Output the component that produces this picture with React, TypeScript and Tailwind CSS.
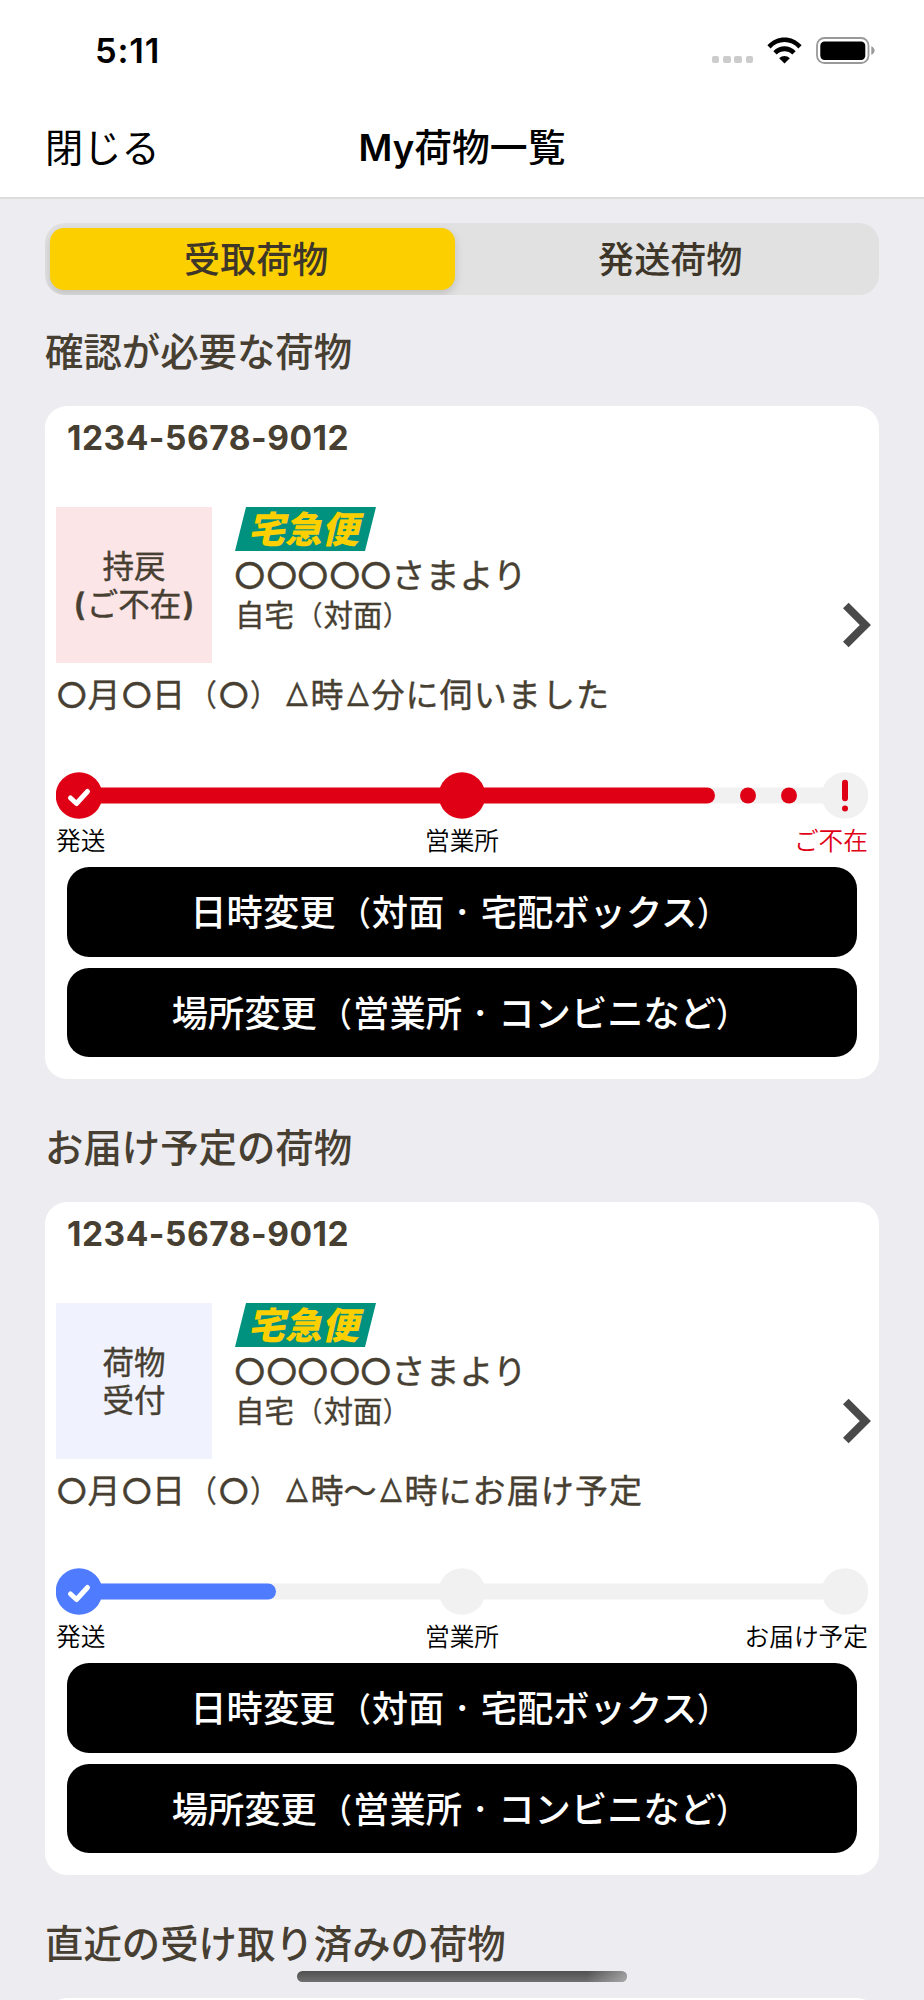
import { clsx } from "clsx";

type Tone = "absent" | "accepted";

interface Parcel {
  id: number;
  heading: string;
  trackingNumber: string;
  status: string[];
  tone: Tone;
  sender: string;
  place: string;
  when: string;
  message: string;
  steps: string[];
}

const parcels: Parcel[] = [
  {
    id: 1,
    heading: "確認が必要な荷物",
    trackingNumber: "1234-5678-9012",
    status: ["持戻", "(ご不在)"],
    tone: "absent",
    sender: "○○○○○さまより",
    place: "自宅（対面）",
    when: "○月○日（○）△時△分",
    message: "に伺いました",
    steps: ["発送", "営業所", "ご不在"],
  },
  {
    id: 2,
    heading: "お届け予定の荷物",
    trackingNumber: "1234-5678-9012",
    status: ["荷物", "受付"],
    tone: "accepted",
    sender: "○○○○○さまより",
    place: "自宅（対面）",
    when: "○月○日（○）△時～△時",
    message: "にお届け予定",
    steps: ["発送", "営業所", "お届け予定"],
  },
];

// Symbols that are set narrower than the kanji around them
const glyphStyles: Record<string, string> = {
  "○": "inline-flex w-[31.5px] justify-center scale-108",
  "△": "inline-flex w-[28px] justify-center scale-x-72 scale-y-95",
  "・": "inline-block scale-70",
  "（": "inline-block origin-right -translate-x-[0.04em] scale-x-85 scale-y-92",
  "）": "inline-block origin-left scale-x-85 scale-y-92",
  "(": "mr-[1.5px] font-semibold",
  ")": "ml-[1.5px] font-semibold",
};

function Glyphs({ text }: { text: string }) {
  return (
    <span className="whitespace-nowrap">
      {[...text].map((char, i) =>
        glyphStyles[char] ? (
          <span key={i} className={glyphStyles[char]}>
            {char}
          </span>
        ) : (
          char
        )
      )}
    </span>
  );
}

function StatusBar() {
  return (
    <div className="flex h-[101px] items-center justify-between pl-[95px] pr-[48px]">
      <span className="pt-[2px] text-[34.5px] font-semibold leading-none tracking-[0.8px] text-black">5:11</span>
      <div className="flex items-center">
        <div className="mr-[14px] mt-[18px] flex gap-[3.7px]">
          {[...Array(4)].map((_, i) => (
            <span key={i} className="h-[7.5px] w-[7.5px] rounded-[2px] bg-[#cccccc]" />
          ))}
        </div>
        <svg width="35" height="27" viewBox="0 0 35 27" className="mr-[14px]">
          <path d="M0.4 8.2C9.8-2.2 25.2-2.2 34.6 8.2L31.4 11.4C23.6 3 11.4 3 3.6 11.4Z" />
          <path d="M6.3 14.2C12.6 7.6 22.4 7.6 28.7 14.2L25.3 17.6C20.8 13.2 14.2 13.2 9.7 17.6Z" />
          <path d="M12.2 21.2C15.4 18.4 19.6 18.4 22.8 21.2L17.5 26.6Z" />
        </svg>
        <svg width="60" height="27" viewBox="0 0 60 27">
          <rect x="1" y="1" width="51.5" height="25" rx="7.5" fill="none" stroke="#999999" strokeWidth="1.8" />
          <rect x="4.3" y="4.5" width="45" height="18.5" rx="4.2" />
          <path d="M55.3 9.2Q58.6 10.8 58.6 13.6T55.3 18Z" fill="#999999" />
        </svg>
      </div>
    </div>
  );
}

function Header() {
  return (
    <header className="border-b-2 border-[#dcdcdc] bg-white">
      <StatusBar />
      <div className="grid h-[96px] grid-cols-3 items-center px-[45px] pb-[2px] text-[38.2px] leading-none text-black">
        <button className="text-left">閉じる</button>
        <h1 className="whitespace-nowrap text-center text-[37.8px] font-medium">
          <span className="text-[36.7px] font-semibold">My</span>荷物一覧
        </h1>
      </div>
    </header>
  );
}

function Tabs() {
  return (
    <div className="mx-[45px] mt-6 flex h-[72px] overflow-hidden rounded-[20px] bg-[#e1e1e1] px-[4.5px] py-[5px] text-[36.1px] font-medium leading-none text-[#3d3629]">
      <button className="h-full w-[405.5px] rounded-[14px] bg-[#fccf00] pl-2 pt-[2px] shadow-[0_4px_10px_rgba(0,0,0,0.15)]">
        受取荷物
      </button>
      <button className="h-full flex-1 pl-[11px] pt-[2px]">発送荷物</button>
    </div>
  );
}

function ServiceLogo() {
  return (
    <svg width="141" height="44" viewBox="0 0 141 44" className="overflow-visible">
      <path d="M11 0H141L130 44H0Z" fill="#00917f" />
      <text
        x="21"
        y="35.5"
        transform="skewX(-13)"
        fontSize="37"
        fontWeight="900"
        fill="#fccf00"
        textLength="111"
        className="font-['Noto_Sans_CJK_JP',sans-serif]"
      >
        宅急便
      </text>
    </svg>
  );
}

function Progress({ tone }: { tone: Tone }) {
  const absent = tone === "absent";
  const color = absent ? "#df0015" : "#4f7bff";
  return (
    <svg width="812" height="47" viewBox="0 0 812 47">
      <rect x="20" y="15.5" width="770" height="16" fill="#f1f1f1" />
      <circle cx="406" cy="23.5" r="23.3" fill={absent ? color : "#f1f1f1"} />
      <circle cx="789" cy="23.5" r="23.3" fill="#f1f1f1" />
      <rect x="20" y="15.5" width={absent ? 639 : 200} height="16" rx="8" fill={color} />
      <circle cx="23" cy="23.5" r="23.3" fill={color} />
      <path
        d="M14.5 26L20.5 31.5L31.5 19.5"
        fill="none"
        stroke="#ffffff"
        strokeWidth="5"
        strokeLinecap="round"
        strokeLinejoin="round"
      />
      {absent && (
        <g fill={color}>
          <circle cx="692" cy="23.5" r="8" />
          <circle cx="733" cy="23.5" r="8" />
          <rect x="786" y="7.7" width="6" height="21.5" rx="3" />
          <circle cx="789" cy="36.5" r="3" />
        </g>
      )}
    </svg>
  );
}

function ParcelCard({ parcel }: { parcel: Parcel }) {
  return (
    <section>
      <h2 className="flex h-[111px] items-center pt-[3px] text-[38.4px] font-medium leading-none">{parcel.heading}</h2>
      <div className="h-[673px] rounded-[22px] bg-white px-[11px]">
        <p className="flex h-[101px] items-start pl-[11px] pt-4 text-[33.5px] font-bold leading-none tracking-[0.5px]">
          {parcel.trackingNumber}
        </p>
        <div className="flex h-[156px]">
          <div
            className={clsx(
              "flex w-[156px] flex-col items-center justify-center pt-px text-[31.5px] leading-[37.5px] [-webkit-text-stroke:0.4px]",
              parcel.tone === "absent" ? "bg-[#fbe5e7]" : "bg-[#f0f3fe]"
            )}
          >
            {parcel.status.map((line) => (
              <Glyphs key={line} text={line} />
            ))}
          </div>
          <div className="ml-[23px] flex-1 leading-none [-webkit-text-stroke:0.4px]">
            <ServiceLogo />
            <p className="-ml-px flex h-[48px] items-center pt-[2px] text-[34px]">
              <Glyphs text={parcel.sender} />
            </p>
            <p className="flex h-[34px] items-center text-[29.5px]">
              <Glyphs text={parcel.place} />
            </p>
          </div>
          <svg width="29" height="46" viewBox="0 0 29 46" className="-mr-1 mt-[95px]">
            <path d="M2.8 3.5L22.3 23L2.8 42.5" fill="none" stroke="#4a4a4a" strokeWidth="8" />
          </svg>
        </div>
        <p className="flex h-[62px] items-center pt-[2px] text-[33px] leading-none [-webkit-text-stroke:0.4px]">
          <Glyphs text={parcel.when} />
          <span className="ml-px tracking-[1.1px]">{parcel.message}</span>
        </p>
        <div className="mt-[47px]">
          <Progress tone={parcel.tone} />
          <div className="grid h-[42px] grid-cols-3 items-center pt-[2px] text-[24.7px] font-[350] leading-none text-black">
            {parcel.steps.map((step, i) => (
              <span
                key={step}
                className={clsx(i === 1 && "text-center", i === 2 && "text-right", step === "ご不在" && "text-[#df0015]")}
              >
                {step}
              </span>
            ))}
          </div>
        </div>
        <div className="mx-[11px] mt-[6px] flex flex-col gap-[11px] text-[36.3px] font-medium leading-none text-white">
          <button className="h-[89.5px] rounded-[22px] bg-black pt-[3px]">
            <Glyphs text="日時変更（対面・宅配ボックス）" />
          </button>
          <button className="h-[89.5px] rounded-[22px] bg-black pt-[3px]">
            <Glyphs text="場所変更（営業所・コンビニなど）" />
          </button>
        </div>
      </div>
    </section>
  );
}

export default function App() {
  return (
    <div className="relative h-[2000px] w-[924px] overflow-hidden bg-[#edecf1] font-['Inter','Noto_Sans_CJK_JP',sans-serif] text-[#473f32]">
      <Header />
      <Tabs />
      <main className="flex flex-col gap-3 px-[45px]">
        {parcels.map((parcel) => (
          <ParcelCard key={parcel.id} parcel={parcel} />
        ))}
        <section>
          <h2 className="flex h-[111px] items-center pt-[3px] text-[38.4px] font-medium leading-none">
            直近の受け取り済みの荷物
          </h2>
          <div className="h-10 rounded-t-[22px] bg-white" />
        </section>
      </main>

      {/* Home indicator */}
      <div className="absolute bottom-[18px] left-[297px] h-[11px] w-[330px] overflow-hidden rounded-full bg-linear-to-b from-[#505050] to-[#707070]">
        <div className="ml-auto h-full w-10 bg-linear-to-r from-transparent to-white/40" />
      </div>
    </div>
  );
}
